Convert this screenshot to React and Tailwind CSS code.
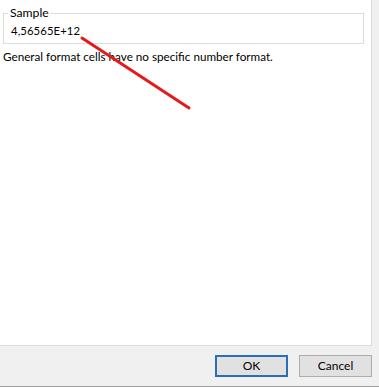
export default function App() {
  return (
    <div className="relative w-[379px] h-[387px] bg-[#f0f0f0] overflow-hidden flex flex-col" style={{ fontFamily: 'Lato, "Noto Sans", sans-serif' }}>
      <div className="flex h-[346px]">
        <div className="w-[372px] bg-white border-r border-b border-[#dcdcdc] pt-[13px] pl-[3px]">
          <div className="relative w-[361px] h-[31px] border border-[#dcdcdc]">
            <span className="absolute -top-[8px] left-[4px] bg-white px-[2px] text-[12.2px] leading-[14px] text-black">Sample</span>
            <div className="pt-[10px] pl-[7px] text-[11.3px] leading-[14px] text-black tracking-[0.1px]">4,56565E+12</div>
          </div>
          <div className="mt-[5px] text-[11.7px] leading-[14px] text-black">General format cells have no specific number format.</div>
        </div>
        <div className="flex-1 bg-[#f0f0f0]" />
      </div>
      <div className="flex-1 flex justify-end items-start pt-[9px] pr-[7px] gap-[11px] border-b border-[#a0a0a0]">
        <button className="w-[73px] h-[22px] border-2 border-[#2a6fb6] bg-[#e1e1e1] text-[12px] text-black flex items-center justify-center">OK</button>
        <button className="w-[73px] h-[22px] border border-[#adadad] bg-[#e1e1e1] text-[12px] text-black flex items-center justify-center">Cancel</button>
      </div>
      <svg className="absolute left-0 top-0" width="379" height="387">
        <line x1="82" y1="38" x2="189" y2="108" stroke="#e51b1b" strokeWidth="3" strokeLinecap="round" />
      </svg>
    </div>
  );
}
